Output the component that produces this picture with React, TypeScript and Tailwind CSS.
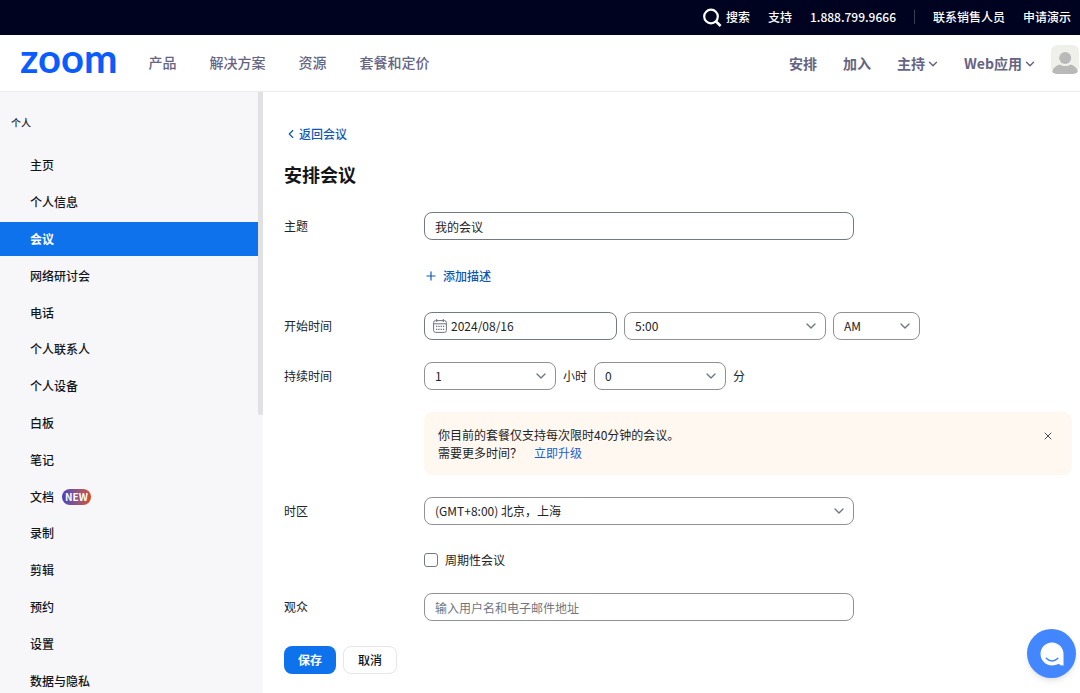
import React from 'react';
import { ChevronDown, ChevronLeft, Plus, X } from 'lucide-react';

const sidebarItems = [
  { label: '主页' },
  { label: '个人信息' },
  { label: '会议', active: true },
  { label: '网络研讨会' },
  { label: '电话' },
  { label: '个人联系人' },
  { label: '个人设备' },
  { label: '白板' },
  { label: '笔记' },
  { label: '文档', isNew: true },
  { label: '录制' },
  { label: '剪辑' },
  { label: '预约' },
  { label: '设置' },
  { label: '数据与隐私' },
];

const TopBar = () => (
  <div className="flex h-[35px] shrink-0 items-center justify-end gap-[18px] bg-[#00031f] pr-[9px] pb-0.5 text-xs font-medium text-white">
    <button type="button" className="flex items-center gap-1">
      <svg viewBox="0 0 20 20" className="h-5 w-5" fill="none" stroke="currentColor">
        <circle cx="9" cy="9.500" r="6.800" strokeWidth="2.200" />
        <path d="M13.800 14.300 L18.600 19" strokeWidth="2.600" />
      </svg>
      搜索
    </button>
    <a href="#support">支持</a>
    <a href="tel:18887999666">1.888.799.9666</a>
    <span className="h-3.5 w-px bg-[#3b3d55]" />
    <a href="#sales">联系销售人员</a>
    <a href="#demo">申请演示</a>
  </div>
);

const Avatar = () => (
  <svg viewBox="0 0 28 29" className="h-[29px] w-7">
    <defs>
      <clipPath id="avatar-frame">
        <rect width="28" height="29" rx="6" />
      </clipPath>
    </defs>
    <g clipPath="url(#avatar-frame)">
      <rect width="28" height="29" fill="#f0f0eb" />
      <circle cx="14.2" cy="13" r="6" fill="#b9b9b9" />
      <path d="M1 29 C1 23.500 5 20.500 9 19.600 C12 21.600 16.500 21.600 19.400 19.600 C23.500 20.500 27 23.500 27.300 29 Z" fill="#b9b9b9" />
    </g>
  </svg>
);

const Header = () => (
  <header className="flex h-[57px] shrink-0 items-center justify-between border-b border-[#ececf0] bg-white pl-5 text-sm text-[#666484]">
    <div className="flex items-center gap-[31px] pb-[3px] font-medium">
      <a href="#home" className="pb-[7px] font-['Lato'] text-[40px] leading-[45px] font-bold text-[#0b5cff]">
        zoom
      </a>
      <nav className="flex items-center gap-[33px]">
        <a href="#products">产品</a>
        <a href="#solutions">解决方案</a>
        <a href="#resources">资源</a>
        <a href="#pricing">套餐和定价</a>
      </nav>
    </div>
    <div className="flex items-center gap-[26px] font-bold">
      <a href="#schedule">安排</a>
      <a href="#join">加入</a>
      <button type="button" className="flex items-center gap-px">
        主持
        <ChevronDown className="mt-0.5 h-3.5 w-3.5" strokeWidth={2.5} />
      </button>
      <button type="button" className="-ml-0.5 flex items-center gap-px">
        Web应用
        <ChevronDown className="mt-0.5 h-3.5 w-3.5" strokeWidth={2.5} />
      </button>
      <button type="button" aria-label="个人" className="-ml-3 pr-px pb-2">
        <Avatar />
      </button>
    </div>
  </header>
);

const Sidebar = () => (
  <aside className="flex w-[263px] shrink-0 overflow-hidden bg-[#f7f7fa] text-xs">
    <nav className="flex-1">
      <h2 className="mt-5 mb-3.5 pl-[11px] text-[10px] leading-[22px] font-medium text-[#222230]">个人</h2>
      <ul className="grid h-[550px] auto-rows-fr gap-0.5">
        {sidebarItems.map((item) => (
          <li key={item.label}>
            <a
              href="#item"
              className={
                item.active
                  ? 'flex h-full items-center bg-[#0e72ed] pl-[30px] font-bold text-white'
                  : 'flex h-full items-center gap-2 pl-[30px] font-medium text-[#131619]'
              }
            >
              {item.label}
              {item.isNew && (
                <span className="rounded-full bg-linear-to-r from-[#4a3cc0] to-[#d9480f] px-[3px] text-[10px] leading-4 font-bold text-white">
                  NEW
                </span>
              )}
            </a>
          </li>
        ))}
      </ul>
    </nav>
    <div className="h-[323px] w-[5px] rounded-b bg-[#e1e1e2]" />
  </aside>
);

type SelectBoxProps = {
  id: string;
  label: string;
  value: string;
  className: string;
};

const SelectBox = ({ id, label, value, className }: SelectBoxProps) => (
  <div className={`relative ${className}`}>
    <select
      id={id}
      aria-label={label}
      defaultValue={value}
      className="h-7 w-full appearance-none rounded-lg border border-[#909096] bg-white px-2.5 text-[#222325]"
    >
      <option>{value}</option>
    </select>
    <ChevronDown
      className="pointer-events-none absolute top-1.5 right-[7px] h-4 w-4 text-[#6e7680]"
      strokeWidth={2}
    />
  </div>
);

const CalendarIcon = () => (
  <svg viewBox="0 0 14 14" className="h-3.5 w-3.5 shrink-0" fill="none" stroke="#6e7680">
    <rect x="0.600" y="1.600" width="12.800" height="11.800" rx="2" />
    <path d="M0.600 4.800 H13.400 M3.700 0 V3 M10.300 0 V3" />
    <path d="M3 7.300 H4.300 M5.300 7.300 H6.600 M7.600 7.300 H8.900 M9.900 7.300 H11.200 M3 10.300 H4.300 M5.300 10.300 H6.600 M7.600 10.300 H8.900 M9.900 10.300 H11.200" strokeWidth="1.300" />
  </svg>
);

type FormRowProps = {
  label?: string;
  htmlFor?: string;
  className: string;
  children: React.ReactNode;
};

const FormRow = ({ label, htmlFor, className, children }: FormRowProps) => (
  <div className={`flex items-center ${className}`}>
    <div className="w-[140px] shrink-0">{label && <label htmlFor={htmlFor}>{label}</label>}</div>
    {children}
  </div>
);

const ScheduleForm = () => (
  <main className="min-w-0 flex-1 overflow-y-auto pt-8 pr-2 pb-4 pl-[21px] text-xs leading-5 text-[#222325]">
    <a href="#meetings" className="flex h-5 w-fit items-center gap-px font-medium text-[#0e57b7]">
      <ChevronLeft className="h-3.5 w-3.5" strokeWidth={2} />
      返回会议
    </a>
    <h1 className="mt-4 text-lg leading-7 font-bold text-[#131619]">安排会议</h1>

    <form>
      <FormRow label="主题" htmlFor="topic" className="mt-6">
        <input
          id="topic"
          type="text"
          defaultValue="我的会议"
          className="h-7 w-full max-w-[430px] rounded-lg border border-[#747a82] px-2.5"
        />
      </FormRow>

      <FormRow className="mt-[26px]">
        <button type="button" className="flex items-center gap-[5px] font-medium text-[#0e57b7]">
          <Plus className="h-3.5 w-3.5" strokeWidth={2} />
          添加描述
        </button>
      </FormRow>

      <FormRow label="开始时间" htmlFor="start-date" className="mt-[26px]">
        <div className="flex gap-[7px]">
          <div className="flex h-7 w-[193px] items-center gap-1 rounded-lg border border-[#747a82] pl-2">
            <CalendarIcon />
            <input id="start-date" type="text" defaultValue="2024/08/16" className="w-full min-w-0 bg-transparent" />
          </div>
          <SelectBox id="start-time" label="时间" value="5:00" className="w-[202px]" />
          <SelectBox id="start-period" label="AM/PM" value="AM" className="w-[87px]" />
        </div>
      </FormRow>

      <FormRow label="持续时间" htmlFor="hours" className="mt-[22px]">
        <div className="flex items-center gap-[7px]">
          <SelectBox id="hours" label="小时" value="1" className="w-[132px]" />
          <span>小时</span>
          <SelectBox id="minutes" label="分" value="0" className="w-[132px]" />
          <span>分</span>
        </div>
      </FormRow>

      <FormRow className="mt-[22px]">
        <div className="flex flex-1 items-start justify-between rounded-lg bg-[#fff8f1] px-3.5 pt-3.5 pb-[13px] leading-[18px]">
          <div>
            <p>你目前的套餐仅支持每次限时40分钟的会议。</p>
            <p>
              需要更多时间？
              <a href="#upgrade" className="ml-3 text-[#1a5fd0]">
                立即升级
              </a>
            </p>
          </div>
          <button type="button" aria-label="关闭" className="mt-1 mr-1">
            <X className="h-3 w-3 text-[#444b53]" strokeWidth={2} />
          </button>
        </div>
      </FormRow>

      <FormRow label="时区" htmlFor="timezone" className="mt-[22px]">
        <SelectBox id="timezone" label="时区" value="(GMT+8:00) 北京，上海" className="w-full max-w-[430px]" />
      </FormRow>

      <FormRow className="mt-[25px]">
        <label className="flex items-center gap-[7px]">
          <input type="checkbox" className="h-3.5 w-3.5 appearance-none rounded-[3px] border border-[#747a82] checked:bg-[#0e72ed]" />
          周期性会议
        </label>
      </FormRow>

      <FormRow label="观众" htmlFor="attendees" className="mt-[23px]">
        <input
          id="attendees"
          type="text"
          placeholder="输入用户名和电子邮件地址"
          className="h-7 w-full max-w-[430px] rounded-lg border border-[#909096] px-2.5 placeholder:text-[#6e7680]"
        />
      </FormRow>

      <div className="mt-[25px] flex gap-[7px]">
        <button type="submit" className="h-7 rounded-lg bg-[#0e72ed] px-3.5 font-bold text-white">
          保存
        </button>
        <button type="button" className="h-7 rounded-lg border border-[#e6e6ea] px-3.5 font-medium text-[#131619]">
          取消
        </button>
      </div>
    </form>
  </main>
);

const ChatButton = () => (
  <button
    type="button"
    aria-label="聊天"
    className="fixed right-1 bottom-[15px] flex h-[49px] w-[49px] items-center justify-center rounded-full bg-[#4287ff] shadow-md"
  >
    <svg viewBox="0 0 24 24" className="h-6 w-6">
      <path d="M12 0.500 C18.300 0.500 23.500 5.500 23.500 11.800 V23.600 C21.500 23.600 19.800 22.900 18.500 21.700 C16.600 22.800 14.400 23.400 12 23.400 C5.600 23.400 0.500 18.300 0.500 12 C0.500 5.600 5.600 0.500 12 0.500 Z" fill="#fff" />
      <path d="M6.300 16.300 C9.500 19.800 14.700 19.800 17.900 16.300" fill="none" stroke="#4287ff" strokeWidth="1.500" strokeLinecap="round" />
    </svg>
  </button>
);

export default function App() {
  return (
    <div className="flex h-screen flex-col bg-white font-['Noto_Sans_CJK_SC','Noto_Sans',sans-serif]">
      <TopBar />
      <Header />
      <div className="flex min-h-0 flex-1">
        <Sidebar />
        <ScheduleForm />
      </div>
      <ChatButton />
    </div>
  );
}
